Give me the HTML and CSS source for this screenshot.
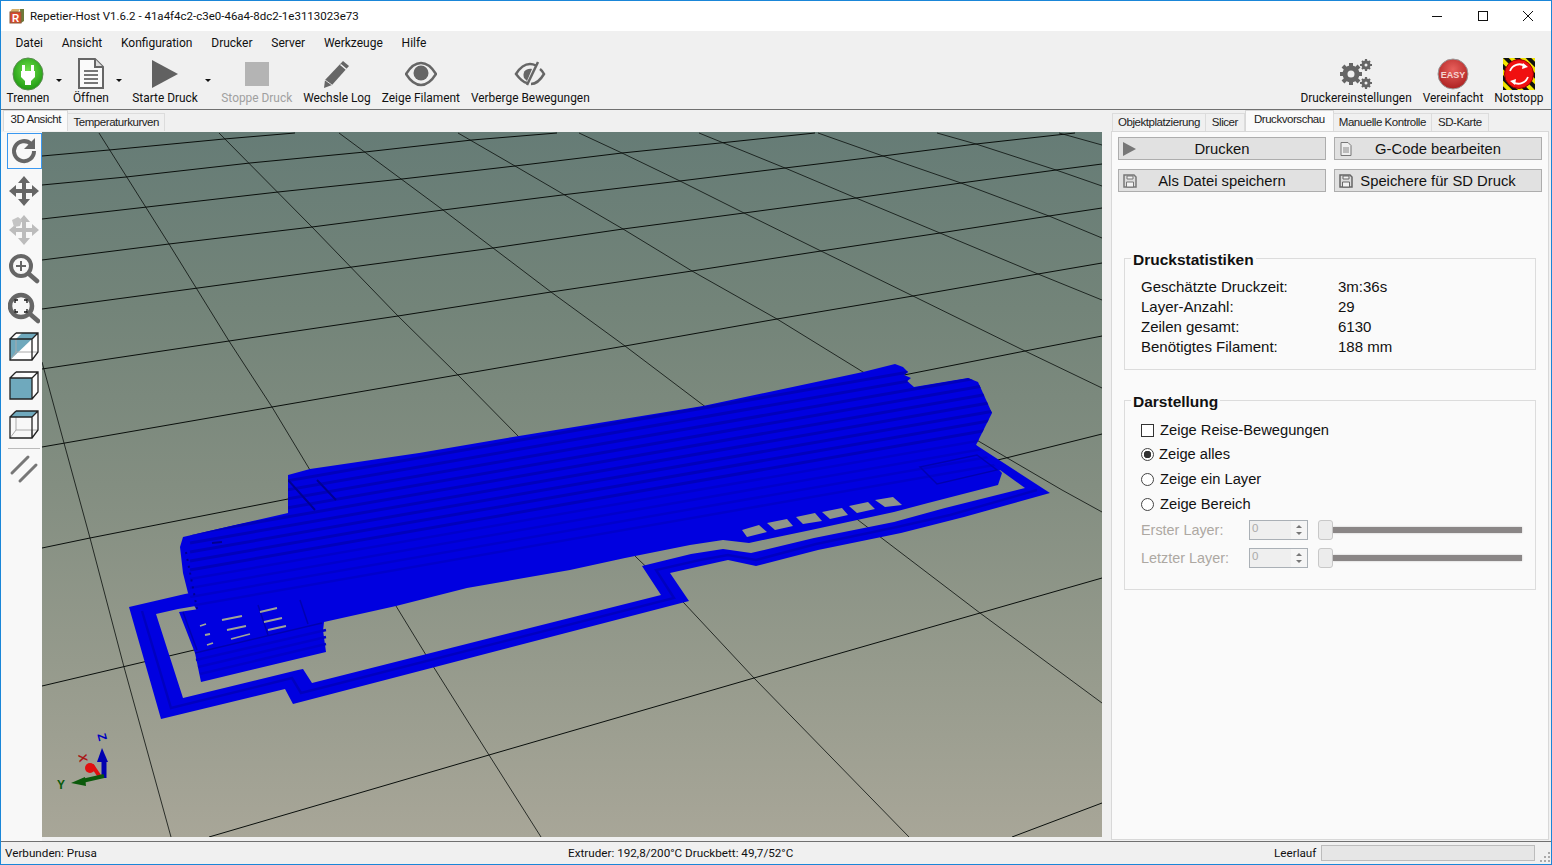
FILE: index.html
```html
<!DOCTYPE html>
<html lang="de">
<head>
<meta charset="utf-8">
<title>Repetier-Host V1.6.2</title>
<link rel="stylesheet" href="styles.css">
</head>
<body>
<div class="window">
  <header class="titlebar">
    <svg class="app-icon" width="16" height="16" viewBox="0 0 16 16"><path d="M11 1h4v12l-3 2z" fill="#6d7a3a"/><path d="M3 1h8l-2 3H1z" fill="#d6b06a"/><rect x="1" y="4" width="11" height="11" fill="#d9482b"/><rect x="1" y="4" width="11" height="11" fill="none" stroke="#8a5a3a"/><text x="3" y="13.5" class="app-r">R</text></svg>
    <span class="title-text">Repetier-Host V1.6.2 - 41a4f4c2-c3e0-46a4-8dc2-1e3113023e73</span>
    <div class="winctl">
      <svg width="45" height="30" viewBox="0 0 45 30"><path d="M17 15.5h10" stroke="#111"/></svg>
      <svg width="45" height="30" viewBox="0 0 45 30"><rect x="18.500" y="10.500" width="9" height="9" fill="none" stroke="#111"/></svg>
      <svg width="45" height="30" viewBox="0 0 45 30"><path d="M18 10l10 10M28 10l-10 10" stroke="#111"/></svg>
    </div>
  </header>
  <nav class="menubar">
    <span class="menu">Datei</span><span class="menu">Ansicht</span><span class="menu">Konfiguration</span><span class="menu">Drucker</span><span class="menu">Server</span><span class="menu">Werkzeuge</span><span class="menu">Hilfe</span>
  </nav>
  <div class="toolbar">
    <div class="tool drop"><div class="ico">
      <svg width="34" height="34" viewBox="0 0 34 34"><defs><radialGradient id="gr" cx=".5" cy=".4" r=".6"><stop offset="0" stop-color="#6fe04a"/><stop offset="1" stop-color="#1f9a12"/></radialGradient></defs><ellipse cx="17" cy="17" rx="15" ry="16" fill="url(#gr)" stroke="#5a8a50"/><path d="M11 8h3v6h6V8h3v6h1v6l-4 4v4h-6v-4l-4-4v-6h1z" fill="#fff"/></svg>
    </div><span class="lbl">Trennen</span><i class="caret"></i></div>
    <div class="tool drop"><div class="ico">
      <svg width="30" height="34" viewBox="0 0 30 34"><path d="M3 2h16l8 8v21H3z" fill="#fafafa" stroke="#666" stroke-width="2"/><path d="M19 2v8h8" fill="#ddd" stroke="#666" stroke-width="2"/><path d="M8 14h14M8 18h14M8 22h14M8 26h14" stroke="#777" stroke-width="2"/></svg>
    </div><span class="lbl">Öffnen</span><i class="caret"></i></div>
    <div class="tool drop"><div class="ico">
      <svg width="28" height="32" viewBox="0 0 28 32"><path d="M1 2l26 14L1 30z" fill="#616161"/></svg>
    </div><span class="lbl">Starte Druck</span><i class="caret"></i></div>
    <div class="tool off"><div class="ico">
      <svg width="26" height="28" viewBox="0 0 26 28"><rect x="1" y="2" width="24" height="24" fill="#b4b4b4"/></svg>
    </div><span class="lbl">Stoppe Druck</span></div>
    <div class="tool"><div class="ico">
      <svg width="30" height="32" viewBox="0 0 30 32"><path d="M21 3l6 5L10 27l-8 3 1-8z" fill="#666"/><path d="M18.500 6.500l6 5" stroke="#f5f5f5" stroke-width="1.500"/><path d="M3 22l7 5" stroke="#ddd"/></svg>
    </div><span class="lbl">Wechsle Log</span></div>
    <div class="tool"><div class="ico">
      <svg width="32" height="26" viewBox="0 0 32 26"><path d="M1 13C6 5 11 2 16 2s10 3 15 11c-5 8-10 11-15 11S6 21 1 13z" fill="none" stroke="#666" stroke-width="2.500"/><circle cx="16" cy="12" r="7.500" fill="#666"/></svg>
    </div><span class="lbl">Zeige Filament</span></div>
    <div class="tool"><div class="ico">
      <svg width="32" height="28" viewBox="0 0 32 28"><path d="M13 23C8 22 5 18 2 14 7 6 11 4 16 4c2 0 4 .5 6 1.500M26 9c2 1.500 3 3 4 5-3 5-8 10-13 10" fill="none" stroke="#666" stroke-width="2.500"/><path d="M10 18c-2-6 2-10 8-9l-5 12z" fill="#666"/><path d="M24 2L13 25" stroke="#666" stroke-width="2.500"/></svg>
    </div><span class="lbl">Verberge Bewegungen</span></div>
    <div class="tool push"><div class="ico">
      <svg width="34" height="32" viewBox="0 0 34 32"><g fill="none" stroke="#666"><circle cx="12" cy="16" r="6" stroke-width="5"/><path d="M12 5v4M12 23v4M1 16h4M19 16h4M4 8l3 3M17 21l3 3M20 8l-3 3M7 21l-3 3" stroke-width="4"/><circle cx="27" cy="7" r="3" stroke-width="3"/><path d="M27 1v2M27 11v2M21 7h2M31 7h2M23 3l1.500 1.500M29.500 9.500L31 11M31 3l-1.500 1.500M24.500 9.500L23 11" stroke-width="2.200"/><circle cx="27" cy="25" r="3" stroke-width="3"/><path d="M27 19v2M27 29v2M21 25h2M31 25h2M23 21l1.500 1.500M29.500 27.500L31 29M31 21l-1.500 1.500M24.500 27.500L23 29" stroke-width="2.200"/></g></svg>
    </div><span class="lbl">Druckereinstellungen</span></div>
    <div class="tool"><div class="ico">
      <svg width="32" height="32" viewBox="0 0 32 32"><defs><radialGradient id="rd" cx=".5" cy=".35" r=".7"><stop offset="0" stop-color="#e8605c"/><stop offset="1" stop-color="#a81c1c"/></radialGradient></defs><circle cx="16" cy="16" r="15" fill="url(#rd)" stroke="#9a9a9a"/><text x="16" y="19.500" class="easy">EASY</text></svg>
    </div><span class="lbl">Vereinfacht</span></div>
    <div class="tool"><div class="ico">
      <svg width="32" height="32" viewBox="0 0 32 32"><defs><pattern id="hz" width="8" height="8" patternUnits="userSpaceOnUse" patternTransform="rotate(-45)"><rect width="8" height="8" fill="#f2e600"/><rect width="4" height="8" fill="#111"/></pattern></defs><rect width="32" height="32" fill="url(#hz)"/><circle cx="16" cy="16" r="14.500" fill="#f01010" stroke="#900" /><path d="M7 13A10 10 0 0 1 22 8M25 19A10 10 0 0 1 10 24" fill="none" stroke="#fff" stroke-width="1.800"/><path d="M20 5l5 4-6 2zM12 27l-5-4 6-2z" fill="#fff"/></svg>
    </div><span class="lbl">Notstopp</span></div>
  </div>

  <main class="main">
    <section class="left">
      <div class="tabs tabs-left">
        <span class="tab active">3D Ansicht</span><span class="tab">Temperaturkurven</span>
      </div>
      <div class="leftbody">
        <aside class="sidebar">
          <button class="sb focus"><svg width="30" height="30" viewBox="0 0 30 30"><path d="M25 15a10 10 0 1 1-3-7" fill="none" stroke="#666" stroke-width="4"/><path d="M26 2v11H15z" fill="#666"/></svg></button>
          <button class="sb"><svg width="32" height="32" viewBox="0 0 32 32"><path d="M16 1l6 7h-4v6h6v-4l7 6-7 6v-4h-6v6h4l-6 7-6-7h4v-6H8v4l-7-6 7-6v4h6V8h-4z" fill="#666"/></svg></button>
          <button class="sb"><svg width="32" height="32" viewBox="0 0 32 32"><path d="M16 1l6 7h-4v6h6v-4l7 6-7 6v-4h-6v6h4l-6 7-6-7h4v-6H8v4l-7-6 7-6v4h6V8h-4z" fill="#bcbcbc"/><path d="M4 6l6-3 4 3-2 6-6 1z" fill="#c4c4c4"/></svg></button>
          <button class="sb"><svg width="32" height="32" viewBox="0 0 32 32"><circle cx="13" cy="13" r="10" fill="none" stroke="#666" stroke-width="4"/><path d="M21 21l8 7" stroke="#666" stroke-width="4.500" stroke-linecap="round"/><path d="M13 8v10M8 13h10" stroke="#666" stroke-width="2"/></svg></button>
          <button class="sb"><svg width="32" height="32" viewBox="0 0 32 32"><circle cx="13" cy="14" r="11" fill="none" stroke="#666" stroke-width="4.500"/><path d="M22 22l8 7" stroke="#666" stroke-width="4.500" stroke-linecap="round"/><path d="M7 11V8h3M16 8h3v3M19 17v3h-3M10 20H7v-3" fill="none" stroke="#111" stroke-width="1.300"/></svg></button>
          <button class="sb"><svg width="32" height="30" viewBox="0 0 32 30"><path d="M8 1h22v19l-6 8H2V7z" fill="#fff"/><path d="M2 7H24L2 28z" fill="#6fa9bd"/><path d="M14 1H30L24 7H8z" fill="#6fa9bd"/><path d="M8 1L2 7H8z" fill="#fff"/><path d="M8 7v13h22M2 28l6-8" fill="none" stroke="#aaa"/><path d="M2 7h22v21H2zM8 1L2 7M30 1l-6 6M8 1h22v19l-6 8" fill="none" stroke="#222" stroke-width="1.300"/></svg></button>
          <button class="sb"><svg width="32" height="30" viewBox="0 0 32 30"><path d="M8 1h22v20l-6 7V7z" fill="#fff"/><rect x="2" y="7" width="22" height="21" fill="#6fa9bd"/><path d="M2 7h22v21H2zM8 1L2 7M30 1l-6 6M8 1h22v20l-6 7" fill="none" stroke="#222" stroke-width="1.300"/></svg></button>
          <button class="sb"><svg width="32" height="30" viewBox="0 0 32 30"><path d="M8 1h22l-6 6H2z" fill="#6fa9bd"/><path d="M8 7v13h22M2 28l6-8M24 20v8" fill="none" stroke="#aaa"/><path d="M2 7h22v21H2zM8 1L2 7M30 1l-6 6M8 1h22v19l-6 8" fill="none" stroke="#222" stroke-width="1.300"/></svg></button>
          <hr class="sb-sep">
          <button class="sb sb-last"><svg width="30" height="30" viewBox="0 0 30 30"><path d="M3 19L19 3M11 27L27 11" stroke="#777" stroke-width="3" stroke-linecap="round"/></svg></button>
        </aside>
        <svg class="scene" width="1060" height="705" viewBox="42 132 1060 705">
          <defs>
            <linearGradient id="floor" x1="0" y1="0" x2="0" y2="1"><stop offset="0" stop-color="#667c76"/><stop offset=".25" stop-color="#738479"/><stop offset=".5" stop-color="#838e81"/><stop offset=".75" stop-color="#959a8c"/><stop offset="1" stop-color="#a8a698"/></linearGradient>
            <clipPath id="body"><path d="M183 537L288 513V475L310 469 419 453 519 436 703 406 863 372 895 364 903 367 908 372 904 375 911 378 907 381 914 387 968 378 978 382 992 413 976 445 1002 473 998 485 928 503 894 512 811 530 749 543 723 540 690 545 625 558 570 570 467 588 396 606 324 622 322 640 198 660 198 613 188 593 183 573 180 547z"/></clipPath>
          </defs>
          <rect x="42" y="132" width="1060" height="705" fill="url(#floor)"/>
          <g class="grid">
            <polyline points="42,156 109,150 224,139 295,133"/>
            <polyline points="42,185 126,177 250,163 365,152 472,140 557,133"/>
            <polyline points="42,219 147,207 278,192 402,179 515,166 622,153 720,143 815,133"/>
            <polyline points="42,260 169,244 312,227 443,210 570,194 680,181 785,168 883,156 976,144 1075,133"/>
            <polyline points="42,309 198,288 352,267 493,248 623,229 744,213 856,198 961,183 1056,170 1102,164"/>
            <polyline points="42,369 229,341 398,316 551,292 692,271 821,251 940,233 1049,216 1102,208"/>
            <polyline points="42,447 272,407 457,375 625,346 777,319 913,296 1038,274 1102,263"/>
            <polyline points="42,548 90,538 288,499 909,374 1025,351 1102,336"/>
            <polyline points="42,686 190,651 1006,458 1102,434"/>
            <polyline points="209,837 489,755 754,678 980,613 1102,578"/>
            <polyline points="1012,837 1102,803"/>
          </g>
          <g class="grid thin">
            <polyline points="42,362 64,443 90,538 124,667 171,837"/>
            <polyline points="99,133 169,244 229,341 272,407 310,470 396,606 426,655 489,755 541,837"/>
            <polyline points="219,133 312,227 398,316 458,375 519,437 637,558 684,603 754,678 909,837"/>
            <polyline points="339,133 443,210 551,292 625,346 703,405 858,520 980,613 1102,703"/>
            <polyline points="458,133 515,166 623,229 692,271 777,319 863,372 980,442 1062,490 1102,512"/>
            <polyline points="579,133 622,153 680,181 744,213 821,251 913,296 1025,351 1102,388"/>
            <polyline points="699,133 785,168 856,198 940,233 1038,274 1102,300"/>
            <polyline points="818,133 883,156 961,183 1049,216 1102,238"/>
            <polyline points="937,133 976,144 1056,170 1102,186"/>
            <polyline points="1059,133 1102,145"/>
          </g>
          <path class="blue" fill-rule="evenodd" d="M129 607L161 719 285 689 293 704 689 601 670 573 701 566 728 560 756 566 818 550 901 533 964 517 1050 493 976 445 185 594zM156 614L183 698 298 670 303 669 312 683 661 595 642 566 691 554 723 549 751 553 814 538 894 522 945 508 1025 488 1000 470 178 609z"/>
          <polyline class="band" points="142,611 171,708 292,678 301,693 674,598 656,570 700,560 728,555 756,560 816,544 897,527 950,515 1037,490"/>
          <path class="blue" d="M183 537L288 513V475L310 469 419 453 519 436 703 406 863 372 895 364 903 367 908 372 904 375 911 378 907 381 914 387 968 378 978 382 992 413 976 445 1002 473 998 485 928 503 894 512 811 530 749 543 723 540 690 545 625 558 570 570 467 588 396 606 324 622 322 640 198 660 198 613 188 593 183 573 180 547z"/>
          <g clip-path="url(#body)" class="stripes">
            <line x1="190" y1="498" x2="1000" y2="356"/>
            <line x1="190" y1="507" x2="1000" y2="365"/>
            <line x1="190" y1="516" x2="1000" y2="374"/>
            <line x1="190" y1="525" x2="1000" y2="383"/>
            <line x1="190" y1="534" x2="1000" y2="392"/>
            <line x1="190" y1="543" x2="1000" y2="401"/>
            <line x1="190" y1="552" x2="1000" y2="410"/>
            <line x1="190" y1="561" x2="1000" y2="419"/>
            <line x1="190" y1="570" x2="1000" y2="428"/>
            <line class="soft" x1="190" y1="579" x2="1000" y2="437"/>
            <line class="soft" x1="190" y1="588" x2="1000" y2="446"/>
            <line class="soft" x1="190" y1="597" x2="1000" y2="455"/>
            <line class="soft" x1="190" y1="606" x2="1000" y2="464"/>
            <path class="dark" d="M288 480l27 30M317 480l19 20M212 543l10-1"/>
            <path class="dashed" d="M186 552l12 62"/>
            <path class="soft-line" d="M920 467l57-12 20 15-60 14z"/>
          </g>
          <path class="holes" d="M742 530l17-5 8 7-20 5zM767 523l20-4 6 7-18 4zM796 517l19-4 7 8-19 3zM822 512l20-4 6 7-18 4zM849 506l19-4 7 7-18 4zM875 500l18-3 9 8-17 2z"/>
          <path class="blue" d="M179 612L305 593 322 623 326 652 201 682 195 653z"/>
          <g class="stripes"><line class="soft" x1="196" y1="660" x2="326" y2="630"/><line class="soft" x1="198" y1="667" x2="326" y2="637"/><line class="soft" x1="200" y1="674" x2="326" y2="644"/><path class="soft-line" d="M195 653L322 623M183 612L197 650M258 605l10 30M300 600l8 24"/></g>
          <path class="slots" d="M222 620l20-4M227 630l19-4M231 639l19-5M260 612l17-4M264 622l18-4M268 630l18-4M200 626l6-2M205 635l5-1M207 645l6-2"/>
          <g class="gizmo">
            <path d="M100 777l-8-12" stroke="#e01010" stroke-width="4"/>
            <circle cx="90" cy="768" r="5" fill="#e01010"/>
            <path d="M104 778V760" stroke="#0000b0" stroke-width="5"/>
            <path d="M102 748l6 14H97z" fill="#0000b0"/>
            <path d="M104 776l-22 5" stroke="#0b5a0b" stroke-width="4"/>
            <path d="M71 783l14-6 1 9z" fill="#0b5a0b"/>
            <text x="102" y="741" class="axis axis-z" transform="rotate(75 102 737)">Z</text>
            <text x="83" y="762" class="axis axis-x" transform="rotate(80 83 758)">X</text>
            <text x="61" y="789" class="axis axis-y">Y</text>
          </g>
        </svg>
      </div>
    </section>

    <section class="right">
      <div class="tabs tabs-right">
        <span class="tab">Objektplatzierung</span><span class="tab t-wide">Slicer</span><span class="tab active">Druckvorschau</span><span class="tab">Manuelle Kontrolle</span><span class="tab t-wide">SD-Karte</span>
      </div>
      <div class="pane">
        <div class="actions">
          <button class="act"><svg width="16" height="16" viewBox="0 0 16 16"><path d="M1 1l13 7L1 15z" fill="#777"/></svg><span>Drucken</span></button>
          <button class="act"><svg width="16" height="16" viewBox="0 0 16 16"><path d="M3 1.500h7l3 3v10H3z" fill="#eee" stroke="#777"/><path d="M5 7h6M5 9h6M5 11h6" stroke="#888"/></svg><span>G-Code bearbeiten</span></button>
          <button class="act"><svg width="16" height="16" viewBox="0 0 16 16"><path d="M2 2h10l2 2v10H2z" fill="#dcdcdc" stroke="#777" stroke-width="1.500"/><path d="M5 3h6v3H5zM4.500 9h7v5h-7z" fill="#f2f2f2" stroke="#777"/></svg><span>Als Datei speichern</span></button>
          <button class="act"><svg width="16" height="16" viewBox="0 0 16 16"><path d="M2 2h10l2 2v10H2z" fill="#dcdcdc" stroke="#666" stroke-width="1.500"/><path d="M5 3h6v3H5zM4.500 9h7v5h-7z" fill="#f2f2f2" stroke="#666"/></svg><span>Speichere für SD Druck</span></button>
        </div>
        <fieldset class="group stats">
          <legend>Druckstatistiken</legend>
          <span>Geschätzte Druckzeit:</span><span>3m:36s</span>
          <span>Layer-Anzahl:</span><span>29</span>
          <span>Zeilen gesamt:</span><span>6130</span>
          <span>Benötigtes Filament:</span><span>188 mm</span>
        </fieldset>
        <fieldset class="group view">
          <legend>Darstellung</legend>
          <label class="opt opt-a"><input type="checkbox"><span>Zeige Reise-Bewegungen</span></label>
          <label class="opt opt-a tight"><input type="radio" name="v" checked><span>Zeige alles</span></label>
          <label class="opt opt-c"><input type="radio" name="v"><span>Zeige ein Layer</span></label>
          <label class="opt opt-a"><input type="radio" name="v"><span>Zeige Bereich</span></label>
          <div class="range">
            <span class="range-lbl">Erster Layer:</span>
            <div class="spin"><span>0</span><i class="spin-b"><b class="up"></b><b class="dn"></b></i></div>
            <div class="slider"><i class="thumb"></i><i class="track"></i></div>
          </div>
          <div class="range">
            <span class="range-lbl">Letzter Layer:</span>
            <div class="spin"><span>0</span><i class="spin-b"><b class="up"></b><b class="dn"></b></i></div>
            <div class="slider"><i class="thumb"></i><i class="track"></i></div>
          </div>
        </fieldset>
      </div>
    </section>
  </main>

  <footer class="status">
    <span class="st-left">Verbunden: Prusa</span>
    <span class="st-mid">Extruder: 192,8/200°C Druckbett: 49,7/52°C</span>
    <span class="st-idle">Leerlauf</span>
    <div class="progress"></div>
    <svg class="grip" width="12" height="12" viewBox="0 0 12 12"><path d="M9 1h2v2H9zM5 5h2v2H5zM9 5h2v2H9zM1 9h2v2H1zM5 9h2v2H5zM9 9h2v2H9z" fill="#aaa"/></svg>
  </footer>
</div>
</body>
</html>
```
FILE: styles.css
```css
* { box-sizing: border-box; }
html, body { margin: 0; padding: 0; }
body { width: 1552px; height: 865px; overflow: hidden; font-family: Roboto, "Liberation Sans", sans-serif; font-size: 11.7px; color: #111; background: #f0f0f0; }
.window { width: 1552px; height: 865px; display: flex; flex-direction: column; border: 1px solid #1a86d8; background: #f0f0f0; }

.titlebar { height: 30px; flex: none; background: #fff; display: flex; align-items: center; padding-left: 8px; }
.app-icon { flex: none; margin-right: 5px; }
.app-r { font: bold 10px "Liberation Sans", sans-serif; fill: #fff; }
.title-text { font-size: 11.5px; }
.winctl { margin-left: auto; display: flex; padding-right: 1px; }

.menubar { height: 23px; flex: none; display: flex; align-items: center; padding-left: 5px; background: #f0f0f0; }
.menu { padding: 0 9.4px; font-size: 12px; }

.toolbar { height: 56px; flex: none; display: flex; background: #f0f0f0; border-bottom: 1px solid #707070; padding-right: 2px; }
.tool { position: relative; display: flex; flex-direction: column; align-items: center; padding: 0 5.5px; }
.tool.drop { padding-right: 18px; }
.tool.push { margin-left: auto; }
.tool.off .lbl { color: #a0a0a0; }
.ico { height: 36px; padding-top: 4px; display: flex; align-items: center; justify-content: center; }
.lbl { line-height: 16px; white-space: nowrap; font-size: 11.9px; }
.caret { position: absolute; right: 5px; top: 25px; width: 0; height: 0; border: 3px solid transparent; border-top: 3px solid #111; }
.easy { font: bold 9px "Liberation Sans", sans-serif; text-anchor: middle; fill: #f6d4d0; }

.main { flex: 1; min-height: 0; display: flex; }
.left { width: 1103px; flex: none; display: flex; flex-direction: column; }
.tabs { height: 21px; flex: none; display: flex; align-items: flex-end; font-family: "Liberation Sans", Arial, sans-serif; font-size: 11.5px; letter-spacing: -.45px; }
.tabs-left { padding-left: 2px; }
.tabs-left .tab.active { margin-right: -1px; padding: 0 6.5px; }
.tab { height: 18px; line-height: 17px; padding: 0 5px; background: #f0f0f0; border: 1px solid #dcdcdc; border-bottom: 0; margin-right: -1px; white-space: nowrap; color: #222; }
.t-wide { padding: 0 6px; }
.tab.active { height: 21px; line-height: 17px; padding: 0 8px; background: #fafafa; margin-right: 1px; border-color: #d8d8d8; }
.leftbody { flex: 1; min-height: 0; display: flex; margin-top: 1px; }
.sidebar { width: 41px; flex: none; background: #f8f8f8; display: flex; flex-direction: column; align-items: center; padding: 1px 0 0 5px; }
.sb { width: 35px; height: 39px; flex: none; padding: 0; border: 1px solid transparent; background: none; display: flex; align-items: center; justify-content: center; }
.sb.focus { border-color: #3a98f0; height: 36px; margin-bottom: 2px; }
.sb-sep { width: 32px; margin: 4px 0 2px; border: 0; border-top: 1px solid #bbb; flex: none; }
.sb-last { height: 36px; }
.scene { flex: none; display: block; }

.grid polyline { fill: none; stroke: #0a0f0c; stroke-width: 1; }
.grid.thin polyline { stroke-width: .8; }
.blue { fill: #0000e0; }
.band { fill: none; stroke: #0000c0; stroke-width: 2.5; }
.stripes line { stroke: #0000bc; stroke-width: 3; }
.stripes line.soft { stroke: #0000cc; stroke-width: 2.5; }
.dark { stroke: #000090; stroke-width: 2; fill: none; }
.dashed { stroke: #000090; stroke-width: 2; fill: none; stroke-dasharray: 2 5; }
.soft-line { stroke: #0000b0; stroke-width: 1.5; fill: none; }
.holes { fill: #8f968a; }
.slots { stroke: #a0a596; stroke-width: 1.8; fill: none; }
.axis { font: bold 12px "Liberation Sans", sans-serif; text-anchor: middle; }
.axis-z { fill: #0000c0; }
.axis-x { fill: #a81818; }
.axis-y { fill: #0b5a0b; }

.right { flex: 1; min-width: 0; margin-left: 7px; display: flex; flex-direction: column; }
.tabs-right { padding-left: 1px; }
.tabs-right .tab.active { margin-left: 1px; margin-right: -1px; }
.pane { flex: 1; min-height: 0; margin: 0 2px 1px 0; background: #fafafa; border: 1px solid #d8d8d8; padding: 5px 6px 0; font-family: "Liberation Sans", Arial, sans-serif; font-size: 14.4px; }

.actions { display: grid; grid-template-columns: 208px 208px; grid-auto-rows: 23px; column-gap: 8px; row-gap: 9px; }
.act { position: relative; display: flex; align-items: center; justify-content: center; padding: 0; background: #e1e1e1; border: 1px solid #adadad; font: inherit; font-size: 14.8px; color: #111; }
.act svg { position: absolute; left: 3px; top: 3px; }

.group { margin: 55px 0 0 6px; width: 412px; padding: 0; border: 1px solid #dcdcdc; min-width: 0; }
.group legend { margin-left: -10px; padding: 4px 2px 0; font-size: 15.5px; font-weight: 700; line-height: 18px; }
.stats { display: grid; grid-template-columns: 197px 1fr; grid-auto-rows: 20px; align-items: center; padding: 7px 10px 13px 16px; font-size: 15px; }
.view { margin-top: 19px; padding: 7px 10px 17px 16px; }
.opt { display: flex; align-items: center; font-size: 14.7px; }
.opt-a { height: 24px; }
.opt-c { height: 26px; }
.opt input { appearance: none; margin: 0 6px 0 0; width: 13px; height: 13px; flex: none; border: 1px solid #333; background: #fff; }
.opt input[type=radio] { border-radius: 50%; border-color: #444; }
.opt input[type=radio]:checked { background: radial-gradient(circle, #333 0 3.5px, #fff 4px); }
.opt.tight input { margin-right: 5px; }
.range { display: flex; align-items: center; height: 28px; color: #ada8a2; }
.range-lbl { width: 108px; flex: none; }
.spin { width: 59px; height: 20px; flex: none; display: flex; justify-content: space-between; border: 1px solid #aab0b6; background: #efefef; font-size: 11.5px; line-height: 15px; padding-left: 2px; color: #aaa; }
.spin-b { width: 16px; display: flex; flex-direction: column; align-items: center; justify-content: center; gap: 4px; background: #f5f5f5; }
.spin-b b { width: 0; height: 0; border: 3px solid transparent; }
.spin-b .up { border-top: 0; border-bottom: 3px solid #777; }
.spin-b .dn { border-bottom: 0; border-top: 3px solid #777; }
.slider { margin-left: 10px; width: 204px; display: flex; align-items: center; }
.thumb { width: 15px; height: 20px; flex: none; background: #ececec; border: 1px solid #c8c8c8; border-radius: 3px; }
.track { flex: 1; height: 6px; background: #8a8686; box-shadow: 0 0 2px #bbb; }

.status { height: 23px; flex: none; display: flex; align-items: center; border-top: 1px solid #707070; background: #f0f0f0; padding-left: 4px; }
.st-left { width: 563px; flex: none; }
.st-mid { width: 706px; flex: none; }
.st-idle { width: 47px; flex: none; }
.progress { width: 214px; height: 16px; flex: none; background: #e6e6e6; border: 1px solid #bcbcbc; }
.grip { margin: 8px 0 0 4px; flex: none; }
```
